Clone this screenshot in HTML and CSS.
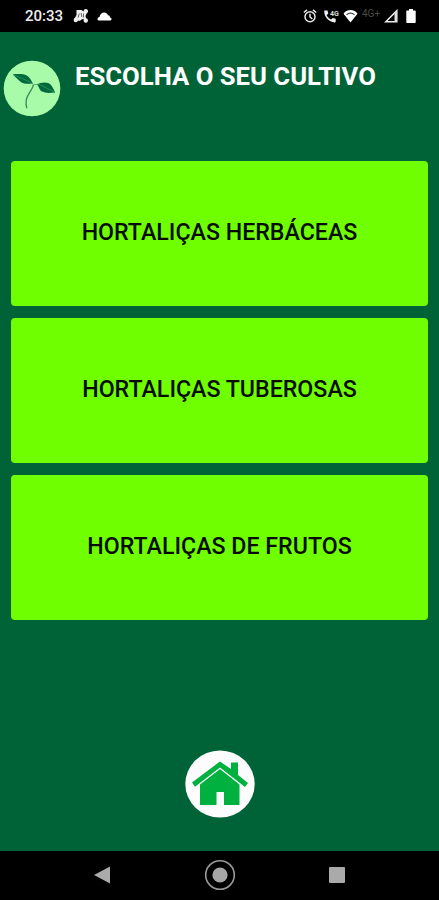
FILE: index.html
```html
<!DOCTYPE html>
<html lang="pt-BR">
<head>
    <meta charset="UTF-8">
    <meta name="viewport" content="width=device-width, initial-scale=1.0">
    <title>Escolha o seu cultivo</title>
    <link rel="stylesheet" href="styles.css">
</head>
<body>
    <!-- Status bar -->
    <div class="status-bar">
        <span class="time">20:33</span>
        <svg class="icon-share" width="16" height="16" viewBox="0 0 16 16">
            <path d="M3.500 2h5l2 1.500 2.500-1 1 2-1.500 3.500 1 4-4-1-3 2-3-1-2.500-.5 2.500-4.500z" fill="#eee"/>
            <circle cx="12.800" cy="3.200" r="2.200" fill="#eee"/>
            <circle cx="12.800" cy="12.500" r="2.200" fill="#eee"/>
            <circle cx="2.800" cy="12" r="2.200" fill="#eee"/>
            <path d="M6.200 5.500l-1 4M8.200 5l.6 4M10.500 5.500v4" stroke="#555" stroke-width=".9" fill="none"/>
        </svg>
        <svg class="icon-cloud" width="15" height="9" viewBox="0 0 15 9">
            <path d="M1.500 8.500C0 8 .2 5.300 2.500 5 3 2.200 5 .5 7.200.5c2 0 3 1 3.800 2.800 1.600.2 2 1.200 2 2.200 2 .3 2 2.500.5 3z" fill="#fff"/>
        </svg>
        <div class="status-icons">
            <svg width="14" height="14" viewBox="0 0 14 14" fill="none" stroke="#e8e8e8" stroke-width="1.500">
                <circle cx="7" cy="7.800" r="5"/>
                <path d="M.8 3.500L4 .9M13.200 3.500L10 .9M7 4.800v3.200l2.300 1.800"/>
            </svg>
            <svg class="icon-call" width="16" height="14" viewBox="0 0 16 14">
                <path d="M.7 1.500h2.800l.8 3-1.600 1.700c1 2 2.400 3.400 4.300 4.300l1.700-1.600 3 .8v2.800c0 .7-.6 1-1.200.9C5 13 .5 8.500.2 2.500c0-.6 0-1 .5-1z" fill="#eee"/>
                <text class="call-label" x="6" y="6.500">4G</text>
            </svg>
            <svg class="icon-wifi" width="15" height="14" viewBox="0 0 15 14">
                <path d="M7.500 13.500L.5 4.700C2 2.200 4.500 1 7.500 1s5.500 1.200 7 3.700z" fill="#fff"/>
                <path d="M3.500 5.700c2.300-1.800 5.700-1.800 8 0" stroke="#444" stroke-width="1.200" fill="none"/>
            </svg>
            <span class="network">4G+</span>
            <svg class="icon-signal" width="14" height="14" viewBox="0 0 14 14">
                <path d="M1.800 12.700L12.800 1.700v11z" fill="none" stroke="#eee" stroke-width="1.500"/>
                <path d="M10.500 4l2.500-2.500V13h-2.500z" fill="#ddd"/>
            </svg>
            <svg class="icon-battery" width="10" height="14" viewBox="0 0 10 14">
                <path d="M3 0h4v1.600h2a.7.7 0 0 1 .7.700v11a.7.7 0 0 1-.7.700H1a.7.7 0 0 1-.7-.7v-11a.7.7 0 0 1 .7-.7h2z" fill="#fff"/>
            </svg>
        </div>
    </div>

    <!-- Main screen -->
    <main class="screen">
        <header class="header">
            <svg class="logo" width="58" height="58" viewBox="0 0 58 58">
                <ellipse cx="29" cy="28.500" rx="28.300" ry="27.800" fill="#a8fba8"/>
                <path d="M9.700 14.300c6-.5 10.500-.6 14 1.200 3 1.700 4.500 5 6.300 7.900-4.500.6-8.500.8-11.800-1.200-3-2-5.500-5-8.500-7.900z" fill="#006a3c"/>
                <path d="M33.700 24.300c3.500-1.600 7.800-2.600 11.500-1.200 3.800 1.600 5 5.700 7 9.400-4.500.3-9.500 1-13.200-.9-3-1.600-2.500-4.800-5.300-7.300z" fill="#006a3c"/>
                <path d="M10 14.500l17 7.500 3.500 2.500 6 0 15 7.500" fill="none" stroke="#3d9c60" stroke-width=".7"/>
                <path d="M30.500 24.800c-1.200 5-6 9-7.200 14.700-.5 3-.5 5.500.5 8.800" fill="none" stroke="#3a8f57" stroke-width="1.400"/>
            </svg>
            <h1>ESCOLHA O SEU CULTIVO</h1>
        </header>

        <div class="options">
            <button type="button">HORTALIÇAS HERBÁCEAS</button>
            <button type="button">HORTALIÇAS TUBEROSAS</button>
            <button type="button">HORTALIÇAS DE FRUTOS</button>
        </div>

        <a class="home-link" href="#" aria-label="Início">
            <svg width="70" height="68" viewBox="0 0 70 68">
                <ellipse cx="35" cy="34" rx="34.700" ry="33.500" fill="#fcfcfc"/>
                <path d="M15 34.500L35 19l19.500 15.500v20.500H39V42h-7.500v13H15z" fill="#00b140"/>
                <path d="M10 35L35 16.500 60 35" fill="none" stroke="#fcfcfc" stroke-width="4"/>
                <path d="M7 32.500L35 11.500l11 7.500v-6.500H53v12.500l10 8-3 4L35 17.500 10 36.800z" fill="#00b140"/>
            </svg>
        </a>
    </main>

    <!-- Android navigation -->
    <nav class="nav-bar">
        <svg width="18" height="20" viewBox="0 0 18 20"><path d="M1 10L17 1.500v17z" fill="#aaa"/></svg>
        <svg width="32" height="32" viewBox="0 0 32 32">
            <circle cx="16" cy="16" r="14.300" fill="none" stroke="#999" stroke-width="1.600"/>
            <circle cx="16" cy="16" r="7.600" fill="#a6a6a6"/>
        </svg>
        <svg width="18" height="18" viewBox="0 0 18 18"><rect x="1" y="1" width="16" height="16" rx="1" fill="#aaa"/></svg>
    </nav>
</body>
</html>
```
FILE: styles.css
```css
* {
    box-sizing: border-box;
}
body {
    font-family: Roboto, Arial, sans-serif;
    display: flex;
    flex-direction: column;
    height: 100vh;
    margin: 0;
    background-color: #000;
    overflow: hidden;
}
svg {
    display: block;
    flex-shrink: 0;
}
.status-bar {
    display: flex;
    align-items: center;
    height: 32px;
    padding: 0 23px 0 25px;
    color: #eee;
}
.time {
    width: 48px;
    font-size: 15px;
    font-weight: 500;
}
.icon-cloud {
    margin-left: 8px;
}
.status-icons {
    display: flex;
    align-items: center;
    margin-left: auto;
}
.icon-call {
    margin-left: 7px;
}
.call-label {
    font-size: 7px;
    font-weight: 700;
    fill: #ddd;
}
.icon-wifi {
    margin-left: 3px;
}
.network {
    width: 19px;
    margin-left: 4px;
    font-size: 10px;
    line-height: 12px;
    padding-bottom: 4px;
    color: #4a4a4a;
}
.icon-signal {
    margin-left: 3px;
}
.icon-battery {
    margin-left: 8px;
}
.screen {
    display: flex;
    flex-direction: column;
    height: 819px;
    background-color: #006338;
}
.header {
    display: flex;
    height: 129px;
    padding: 28px 3px 0;
}
.header h1 {
    margin: 1px 0 0 14px;
    font-size: 25.700px;
    line-height: 31px;
    font-weight: 700;
    color: #fff;
    white-space: nowrap;
}
.options {
    display: flex;
    flex-direction: column;
    gap: 12px;
    padding: 0 11px;
}
.options button {
    height: 145px;
    padding: 0 0 4px;
    border: none;
    border-radius: 4px;
    background-color: #70ff00;
    color: #060d00;
    font-family: inherit;
    font-size: 23.200px;
    font-weight: 500;
    cursor: pointer;
}
.home-link {
    align-self: center;
    margin-top: 130px;
}
.nav-bar {
    display: flex;
    align-items: center;
    justify-content: space-between;
    height: 49px;
    padding: 0 93px 1px;
}
```
